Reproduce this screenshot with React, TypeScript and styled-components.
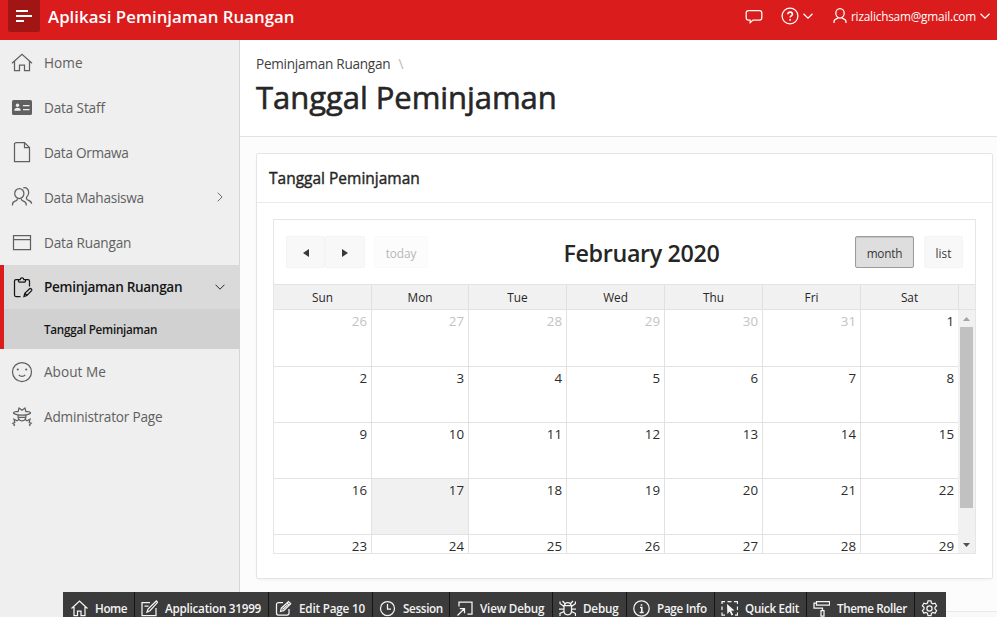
import React from "react";
import styled, { createGlobalStyle, css } from "styled-components";

const Global = createGlobalStyle`
  * { box-sizing: border-box; }
  html, body { margin: 0; overflow: hidden; }
  body { font-family: "Open Sans", "Noto Sans", sans-serif; color: #262626; background: #fcfcfc; }
`;

const Page = styled.div`
  position: relative;
  display: flex;
  flex-direction: column;
  height: 617px;
  overflow: hidden;
`;

const Label = styled.span<{ $track?: number }>`
  white-space: nowrap;
  letter-spacing: ${(p) => p.$track ?? 0}px;
`;

const Glyph = styled.svg<{ $stroke?: number }>`
  display: block;
  flex: none;
  fill: none;
  stroke: currentColor;
  stroke-width: ${(p) => p.$stroke ?? 1.25};
`;

/* ---------- header ---------- */

const TopBar = styled.header`
  flex: none;
  display: flex;
  align-items: flex-start;
  height: 40px;
  padding: 0 7px 0 8px;
  background: #da1c1c;
  color: #fff;
`;

const MenuButton = styled.button`
  width: 32px;
  height: 32px;
  padding: 0;
  border: 0;
  border-radius: 0 0 2px 2px;
  background: #a11515;
  color: #fff;
`;

const AppTitle = styled.div`
  flex: 1;
  margin-left: 8px;
  font-size: 16.8px;
  line-height: 33px;
  font-weight: 600;
`;

const HeaderActions = styled.nav`
  display: flex;
  align-items: center;
  height: 32px;
  font-size: 11.8px;
`;

const Action = styled.div<{ $gap: number; $after: number }>`
  display: flex;
  align-items: center;
  gap: ${(p) => p.$gap}px;
  margin-right: ${(p) => p.$after}px;
`;

/* ---------- sidebar ---------- */

const Columns = styled.div`
  flex: 1;
  display: flex;
  min-height: 0;
`;

const Sidebar = styled.aside`
  flex: none;
  width: 240px;
  background: #efefef;
  border-right: 1px solid #d6d6d6;
`;

const NavRow = styled.a<{ $active?: boolean; $raised?: boolean }>`
  display: flex;
  align-items: center;
  height: 45px;
  padding: 0 14px ${(p) => (p.$raised ? 1 : 0)}px 10px;
  font-size: 13.6px;
  color: #606060;
  ${(p) =>
    p.$active &&
    css`
      height: 44px;
      padding: 0 15px 1px 6px;
      border-left: 4px solid #da1c1c;
      margin-right: -1px;
      background: #dadada;
      color: #161616;
      font-weight: 600;
    `}
`;

const NavText = styled(Label)`
  flex: 1;
  margin-left: 10px;
`;

const SubRow = styled.a`
  display: flex;
  align-items: center;
  height: 40px;
  margin-right: -1px;
  padding-left: 40px;
  border-left: 4px solid #da1c1c;
  background: #d1d1d1;
  color: #161616;
  font-size: 11.7px;
  font-weight: 600;
`;

/* ---------- main ---------- */

const Main = styled.main`
  flex: 1;
  display: flex;
  flex-direction: column;
  min-width: 0;
`;

const TitleBar = styled.section`
  flex: none;
  height: 97px;
  padding: 14px 16px 0;
  background: #fff;
  border-bottom: 1px solid #e2e2e2;
`;

const Crumbs = styled.div`
  display: flex;
  gap: 8px;
  font-size: 13.6px;
  line-height: 20px;
  color: #404040;
`;

const Slash = styled.span`
  color: #b8b8b8;
`;

const Heading = styled.h1`
  margin: 3px 0 0;
  font-size: 31px;
  line-height: 40px;
  font-weight: 400;
  -webkit-text-stroke: 0.6px currentColor;
`;

const Card = styled.section`
  flex: none;
  width: 737px;
  height: 426px;
  margin: 16px 0 0 16px;
  background: #fff;
  border: 1px solid #e5e5e5;
  border-radius: 2px;
  box-shadow: 0 2px 4px -2px rgba(0, 0, 0, 0.08);
`;

const CardTitle = styled.h2`
  height: 49px;
  margin: 0;
  padding-left: 12px;
  border-bottom: 1px solid #ebebeb;
  font-size: 15.5px;
  line-height: 49px;
  font-weight: 400;
  -webkit-text-stroke: 0.4px currentColor;
`;

const Footer = styled.footer`
  flex: none;
  height: 20px;
  margin-top: 32px;
  border-top: 1px solid #e9e9e9;
  background: #f9f9f9;
`;

/* ---------- calendar ---------- */

const Calendar = styled.div`
  width: 703px;
  height: 335px;
  margin: 16px;
  border: 1px solid #e6e6e6;
  display: flex;
  flex-direction: column;
`;

const CalToolbar = styled.div`
  flex: none;
  display: grid;
  grid-template-columns: 1fr auto 1fr;
  align-items: center;
  height: 64px;
  padding: 0 12px;
`;

const Month = styled.h3`
  margin: 2px 0 0 34px;
  font-size: 23.3px;
  line-height: 32px;
  font-weight: 600;
`;

const ButtonSet = styled.div<{ $end?: boolean }>`
  display: flex;
  justify-content: ${(p) => (p.$end ? "flex-end" : "flex-start")};
`;

const CalButton = styled.button<{ $w: number; $kind?: "pressed" | "faded"; $space?: number }>`
  display: flex;
  align-items: center;
  justify-content: center;
  width: ${(p) => p.$w}px;
  height: 32px;
  margin-left: ${(p) => p.$space ?? 0}px;
  padding: 1px 0 0;
  border: 1px solid #f4f4f4;
  border-radius: 2px;
  background: #f8f8f8;
  color: #383838;
  font: 400 11.8px "Open Sans", sans-serif;
  ${(p) =>
    p.$kind === "pressed" &&
    css`
      border-color: #9b9b9b;
      background: #dedede;
      box-shadow: inset 0 1px 1px rgba(0, 0, 0, 0.12);
    `}
  ${(p) =>
    p.$kind === "faded" &&
    css`
      border-color: #fafafa;
      background: #fcfcfc;
      color: #b8b8b8;
    `}
`;

const Weekdays = styled.div`
  flex: none;
  display: grid;
  grid-template-columns: 98px 97px repeat(5, 98px) 1fr;
  height: 26px;
  border-top: 1px solid #e2e2e2;
  border-bottom: 1px solid #e2e2e2;
  background: #f1f1f1;
`;

const Weekday = styled.div`
  border-right: 1px solid #e0e0e0;
  text-align: center;
  font-size: 11.8px;
  line-height: 25px;
  &:last-child { border-right: 0; }
`;

const CalBody = styled.div`
  flex: 1;
  display: flex;
  min-height: 0;
`;

const Weeks = styled.div`
  flex: 1;
  display: grid;
  grid-template-rows: 57px 56px 56px 56px 19px;
  overflow: hidden;
`;

const Week = styled.div`
  display: grid;
  grid-template-columns: 98px 97px repeat(4, 98px) 97px;
  &:last-child > * { border-bottom: 0; }
`;

const Day = styled.div<{ $dim?: boolean; $today?: boolean }>`
  padding: 4px 4px 0 0;
  border-right: 1px solid #e2e2e2;
  border-bottom: 1px solid #e2e2e2;
  background: ${(p) => (p.$today ? "#f1f1f1" : "#fff")};
  color: ${(p) => (p.$dim ? "#c3c3c3" : "#2c2c2c")};
  font-size: 13.3px;
  line-height: 14px;
  text-align: right;
  &:last-child { border-right: 0; }
`;

const ScrollTrack = styled.div`
  flex: none;
  display: flex;
  flex-direction: column;
  align-items: center;
  width: 17px;
  background: #f1f1f1;
`;

const ScrollCap = styled.div`
  display: flex;
  align-items: center;
  justify-content: center;
  height: 17px;
`;

const Thumb = styled.div`
  width: 13px;
  height: 181px;
  margin-bottom: auto;
  background: #c1c1c1;
`;

/* ---------- developer toolbar ---------- */

const DevBar = styled.div`
  position: absolute;
  left: 63px;
  top: 592px;
  display: flex;
  height: 32px;
  background: rgba(48, 48, 48, 0.94);
  color: #f4f4f4;
`;

const DevItem = styled.div<{ $w: number }>`
  display: flex;
  align-items: center;
  gap: 7px;
  width: ${(p) => p.$w}px;
  padding: 0 0 0 6px;
  border-right: 1px solid #141414;
  font-size: 11.7px;
  font-weight: 600;
  &:first-child { padding-left: 8px; }
  &:last-child { border-right: 0; }
`;

/* ---------- icons ---------- */

const navIcons: Record<string, React.ReactNode> = {
  home: <path d="M2 13.2 12 4.3l10 8.900M4.500 11.500v9h5V15h5v5.500h5v-9" />,
  card: (
    <>
      <rect x="2" y="5" width="20" height="15" rx="1.600" fill="currentColor" stroke="none" />
      <circle cx="7.500" cy="10.300" r="1.700" fill="#efefef" stroke="none" />
      <path d="M4.300 15.700c0-2.200 1.300-3 3.200-3s3.200.8 3.200 3z" fill="#efefef" stroke="none" />
      <path d="M13 10.500h6.500M13 14.500h6.500" stroke="#efefef" />
    </>
  ),
  file: <path d="M6 2.500h8.500l5 5v14h-15v-18zM14.500 2.500v5h5" />,
  users: (
    <>
      <ellipse cx="9.300" cy="8.500" rx="4.600" ry="5" />
      <path d="M2.500 20.500v-1.200c0-2.800 1.800-3 3.800-3.700.9-.4 1.200-1 1.200-2.100M11.200 13.500c0 1.100.3 1.700 1.200 2.100 2 .7 3.800 1 3.800 3.700v1.200M13.300 2.900c3.200-.8 5.400 1.400 5.400 4.700 0 2-.8 3.600-2.200 4.600v1.200c0 1.200.8 1.500 2.100 2 1.900.7 3 1.300 3 3.400" />
    </>
  ),
  window: <path d="M3.500 5.500h17v14h-17zM3.500 9.500h17" />,
  clip: (
    <>
      <path d="M8.500 4.500H6A1.500 1.500 0 0 0 4.500 6v14A1.500 1.500 0 0 0 6 21.500h4.500M15.500 4.500H18A1.500 1.500 0 0 1 19.500 6v5.500" />
      <path d="M8.500 4.500h1.700c.2-2.200 3.400-2.200 3.600 0h1.700V6a1.200 1.200 0 0 1-1.200 1.200H9.700A1.200 1.200 0 0 1 8.500 6z" />
      <path d="m14 21.500.8-3.200 4.800-4.600c1-.9 2.900.9 2 1.900l-4.700 4.900zM14.800 18.300l2.100 2.200" />
    </>
  ),
  smile: (
    <>
      <circle cx="12" cy="12" r="9.500" />
      <path d="M8.800 14.800c1.600 2 4.800 2 6.400 0" />
      <circle cx="7.800" cy="9.500" r="1.100" fill="currentColor" stroke="none" />
      <circle cx="16.200" cy="9.500" r="1.100" fill="currentColor" stroke="none" />
    </>
  ),
  secret: (
    <path d="M8 7.200 9 3l3 2.300L15 3l1 4.200M7.800 6.300c-4.600.4-5.200 1.700-3.300 2.600 3.600 1.700 11.400 1.700 15 0 1.900-.9 1.300-2.200-3.300-2.600M8 10.500c0 3 1.500 5.300 4 5.300s4-2.300 4-5.300M8.300 12.300h7.400M8.500 14.800 7 15.800l-3-1.600.8 3.300-2 .8 1.700 1.500-.5 1.200M15.500 14.800l1.500 1 3-1.600-.8 3.300 2 .8-1.700 1.500.5 1.200" />
  ),
};

const devIcons: Record<string, React.ReactNode> = {
  home: <path d="M.5 8.500 8.500 1l8 7.500M3 7v8.500h3.500V11H10v4.500h4V7" />,
  app: <path d="M9 2.500H1v13h14V8M3.500 6h4M6 12l1-3 8.300-8 1.300 1.300L9 10.700z" />,
  edit: <path d="M8 2.500H3.500a2 2 0 0 0-2 2V13a2 2 0 0 0 2 2H12a2 2 0 0 0 2-2V9M5.500 11.500l.8-3.300 7.200-6.700 2.200 2.200-7 7zM12 3l2.300 2.200M7.500 9.500l5-4.600" />,
  clock: (
    <>
      <circle cx="8.500" cy="8.500" r="7" />
      <path d="M8.500 4v5H12" />
    </>
  ),
  view: <path d="M3 6.500V2h13v12h-4.500M1.500 15.500l7-7M3.800 8.500h4.700v4.800" />,
  bug: (
    <path d="M5 5.500h7.500V11c0 5-7.500 5-7.500 0zM5.500 5.300c.5-3.500 6-3.500 6.500 0M1 1.500v2l4 3M16.500 1.500v2l-4 3M0 9h5M12.500 9h5M1 16v-2.500l4-2M16.500 16v-2.500l-4-2M3.500 1l2.300 2.500M14 1l-2.300 2.500" />
  ),
  info: (
    <>
      <circle cx="8.500" cy="8.500" r="7.700" />
      <path d="M7 7.500h1.800v4.800M6.700 12.500h4M8.500 4.200v1.600" strokeWidth="1.600" />
    </>
  ),
  quick: (
    <>
      <path d="M1 4V1.500h3M6.500 1.500h4M13 1.500h3.500V4M16.500 6.500V10M16.500 12.500V15H14M1 6.500V10M1 12.500V15h3" />
      <path d="m6 4 7.500 6.500-3.200.3 1.900 4-1.700.8-1.800-4L6.300 14z" fill="currentColor" stroke="none" />
    </>
  ),
  roller: <path d="M3.500 1.500h13V5h-13zM3.500 3H1v5h8.500v2.500M8 10.500h3v5.500H8z" />,
  gear: (
    <>
      <circle cx="8.500" cy="8.500" r="2.600" />
      <path d="m7 .9h3l.5 2.200 1.400.8 2.200-.7 1.500 2.600-1.600 1.500v1.800l1.600 1.500-1.500 2.600-2.200-.7-1.400.8-.5 2.300H7l-.5-2.300-1.400-.8-2.200.7-1.500-2.600L3 9.100V7.300L1.400 5.800l1.500-2.600 2.200.7 1.400-.8z" />
    </>
  ),
};

const NavIcon = ({ name }: { name: string }) => (
  <Glyph width="24" height="24" viewBox="0 0 24 24">{navIcons[name]}</Glyph>
);

const Chevron = ({ dir = "down", stroke = 1.25 }: { dir?: "down" | "right"; stroke?: number }) => (
  <Glyph width="10" height="10" viewBox="0 0 10 10" $stroke={stroke}>
    <path d={dir === "down" ? "M.5 2.700 5 7.200l4.500-4.500" : "m2.700.7 4.400 4.300-4.400 4.300"} />
  </Glyph>
);

/* ---------- data ---------- */

const navTop = [
  { icon: "home", text: "Home", track: 0.05 },
  { icon: "card", text: "Data Staff", track: -0.15 },
  { icon: "file", text: "Data Ormawa", track: -0.28 },
  { icon: "users", text: "Data Mahasiswa", track: -0.26, more: true },
  { icon: "window", text: "Data Ruangan", track: -0.17 },
];

const navBottom = [
  { icon: "smile", text: "About Me", track: 0.02 },
  { icon: "secret", text: "Administrator Page", track: -0.2 },
];

const weekdays = ["Sun", "Mon", "Tue", "Wed", "Thu", "Fri", "Sat"];

const weeks = [
  [26, 27, 28, 29, 30, 31, 1],
  [2, 3, 4, 5, 6, 7, 8],
  [9, 10, 11, 12, 13, 14, 15],
  [16, 17, 18, 19, 20, 21, 22],
  [23, 24, 25, 26, 27, 28, 29],
];

const devItems = [
  { icon: "home", text: "Home", w: 72, track: -0.4 },
  { icon: "app", text: "Application 31999", w: 134, track: -0.25 },
  { icon: "edit", text: "Edit Page 10", w: 104, track: -0.2 },
  { icon: "clock", text: "Session", w: 77, track: -0.35 },
  { icon: "view", text: "View Debug", w: 103, track: -0.2 },
  { icon: "bug", text: "Debug", w: 74, track: -0.2 },
  { icon: "info", text: "Page Info", w: 88, track: -0.3 },
  { icon: "quick", text: "Quick Edit", w: 92, track: -0.3 },
  { icon: "roller", text: "Theme Roller", w: 108, track: -0.4 },
  { icon: "gear", text: "", w: 31, track: 0 },
];

export default function App() {
  return (
    <Page>
      <Global />
      <TopBar>
        <MenuButton aria-label="Menu">
          <Glyph width="32" height="32" viewBox="0 0 32 32" $stroke={2}>
            <path d="M8 11h12M8 16h16M8 21h8" />
          </Glyph>
        </MenuButton>
        <AppTitle><Label $track={0.04}>Aplikasi Peminjaman Ruangan</Label></AppTitle>
        <HeaderActions>
          <Action $gap={0} $after={18}>
            <Glyph width="18" height="18" viewBox="0 0 18 18">
              <path d="M3.500 3.500h11c1.400 0 2.300 1 2.300 2.300v5c0 1.300-.9 2.300-2.300 2.300H8l-2.800 2.500v-2.500H3.500c-1.400 0-2.300-1-2.300-2.300v-5c0-1.300.9-2.300 2.300-2.300z" />
            </Glyph>
          </Action>
          <Action $gap={4} $after={20}>
            <Glyph width="18" height="18" viewBox="0 0 18 18">
              <circle cx="9" cy="9" r="7.900" />
              <path d="M6.800 7.300c0-3 4.600-2.700 4.600-.1 0 1.700-2.300 1.700-2.300 3.400M9.100 12v1.700" strokeWidth="1.600" />
            </Glyph>
            <Chevron />
          </Action>
          <Action $gap={4} $after={0}>
            <Glyph width="14" height="18" viewBox="0 0 14 18">
              <ellipse cx="7" cy="6.300" rx="4.200" ry="4.700" />
              <path d="M1 16v-1.200c0-2.500 1.700-2.800 3.300-3.400.8-.3 1-.7 1-1.500M8.700 9.900c0 .8.2 1.200 1 1.500 1.600.6 3.300 1 3.300 3.400V16" />
            </Glyph>
            <Label $track={-0.19}>rizalichsam@gmail.com</Label>
            <Chevron />
          </Action>
        </HeaderActions>
      </TopBar>
      <Columns>
        <Sidebar>
          {navTop.map((n) => (
            <NavRow key={n.text} $raised>
              <NavIcon name={n.icon} />
              <NavText $track={n.track}>{n.text}</NavText>
              {n.more && <Chevron dir="right" stroke={0.9} />}
            </NavRow>
          ))}
          <NavRow $active>
            <NavIcon name="clip" />
            <NavText $track={-0.33}>Peminjaman Ruangan</NavText>
            <Chevron stroke={0.9} />
          </NavRow>
          <SubRow><Label $track={-0.27}>Tanggal Peminjaman</Label></SubRow>
          {navBottom.map((n) => (
            <NavRow key={n.text}>
              <NavIcon name={n.icon} />
              <NavText $track={n.track}>{n.text}</NavText>
            </NavRow>
          ))}
        </Sidebar>
        <Main>
          <TitleBar>
            <Crumbs>
              <Label $track={-0.26}>Peminjaman Ruangan</Label>
              <Slash>\</Slash>
            </Crumbs>
            <Heading><Label $track={-0.05}>Tanggal Peminjaman</Label></Heading>
          </TitleBar>
          <Card>
            <CardTitle><Label>Tanggal Peminjaman</Label></CardTitle>
            <Calendar>
              <CalToolbar>
                <ButtonSet>
                  <CalButton $w={39} aria-label="Previous">
                    <Glyph width="6" height="8" viewBox="0 0 6 8"><path d="M6 0v8L0 4z" fill="currentColor" stroke="none" /></Glyph>
                  </CalButton>
                  <CalButton $w={40} aria-label="Next">
                    <Glyph width="6" height="8" viewBox="0 0 6 8"><path d="M0 0v8l6-4z" fill="currentColor" stroke="none" /></Glyph>
                  </CalButton>
                  <CalButton $w={54} $space={9} $kind="faded"><Label $track={-0.1}>today</Label></CalButton>
                </ButtonSet>
                <Month><Label $track={-0.35}>February 2020</Label></Month>
                <ButtonSet $end>
                  <CalButton $w={59} $kind="pressed"><Label $track={-0.2}>month</Label></CalButton>
                  <CalButton $w={39} $space={10}>list</CalButton>
                </ButtonSet>
              </CalToolbar>
              <Weekdays>
                {weekdays.map((d) => <Weekday key={d}>{d}</Weekday>)}
                <Weekday />
              </Weekdays>
              <CalBody>
                <Weeks>
                  {weeks.map((w, r) => (
                    <Week key={r}>
                      {w.map((d) => (
                        <Day key={d} $dim={r === 0 && d > 7} $today={d === 17}>{d}</Day>
                      ))}
                    </Week>
                  ))}
                </Weeks>
                <ScrollTrack>
                  <ScrollCap><Glyph width="7" height="4" viewBox="0 0 7 4"><path d="M0 4h7L3.500 0z" fill="#a3a3a3" stroke="none" /></Glyph></ScrollCap>
                  <Thumb />
                  <ScrollCap><Glyph width="7" height="4" viewBox="0 0 7 4"><path d="M0 0h7L3.500 4z" fill="#505050" stroke="none" /></Glyph></ScrollCap>
                </ScrollTrack>
              </CalBody>
            </Calendar>
          </Card>
          <Footer />
        </Main>
      </Columns>
      <DevBar>
        {devItems.map((d) => (
          <DevItem key={d.icon} $w={d.w}>
            <Glyph width="17" height="17" viewBox="0 0 17 17">{devIcons[d.icon]}</Glyph>
            {d.text && <Label $track={d.track}>{d.text}</Label>}
          </DevItem>
        ))}
      </DevBar>
    </Page>
  );
}
